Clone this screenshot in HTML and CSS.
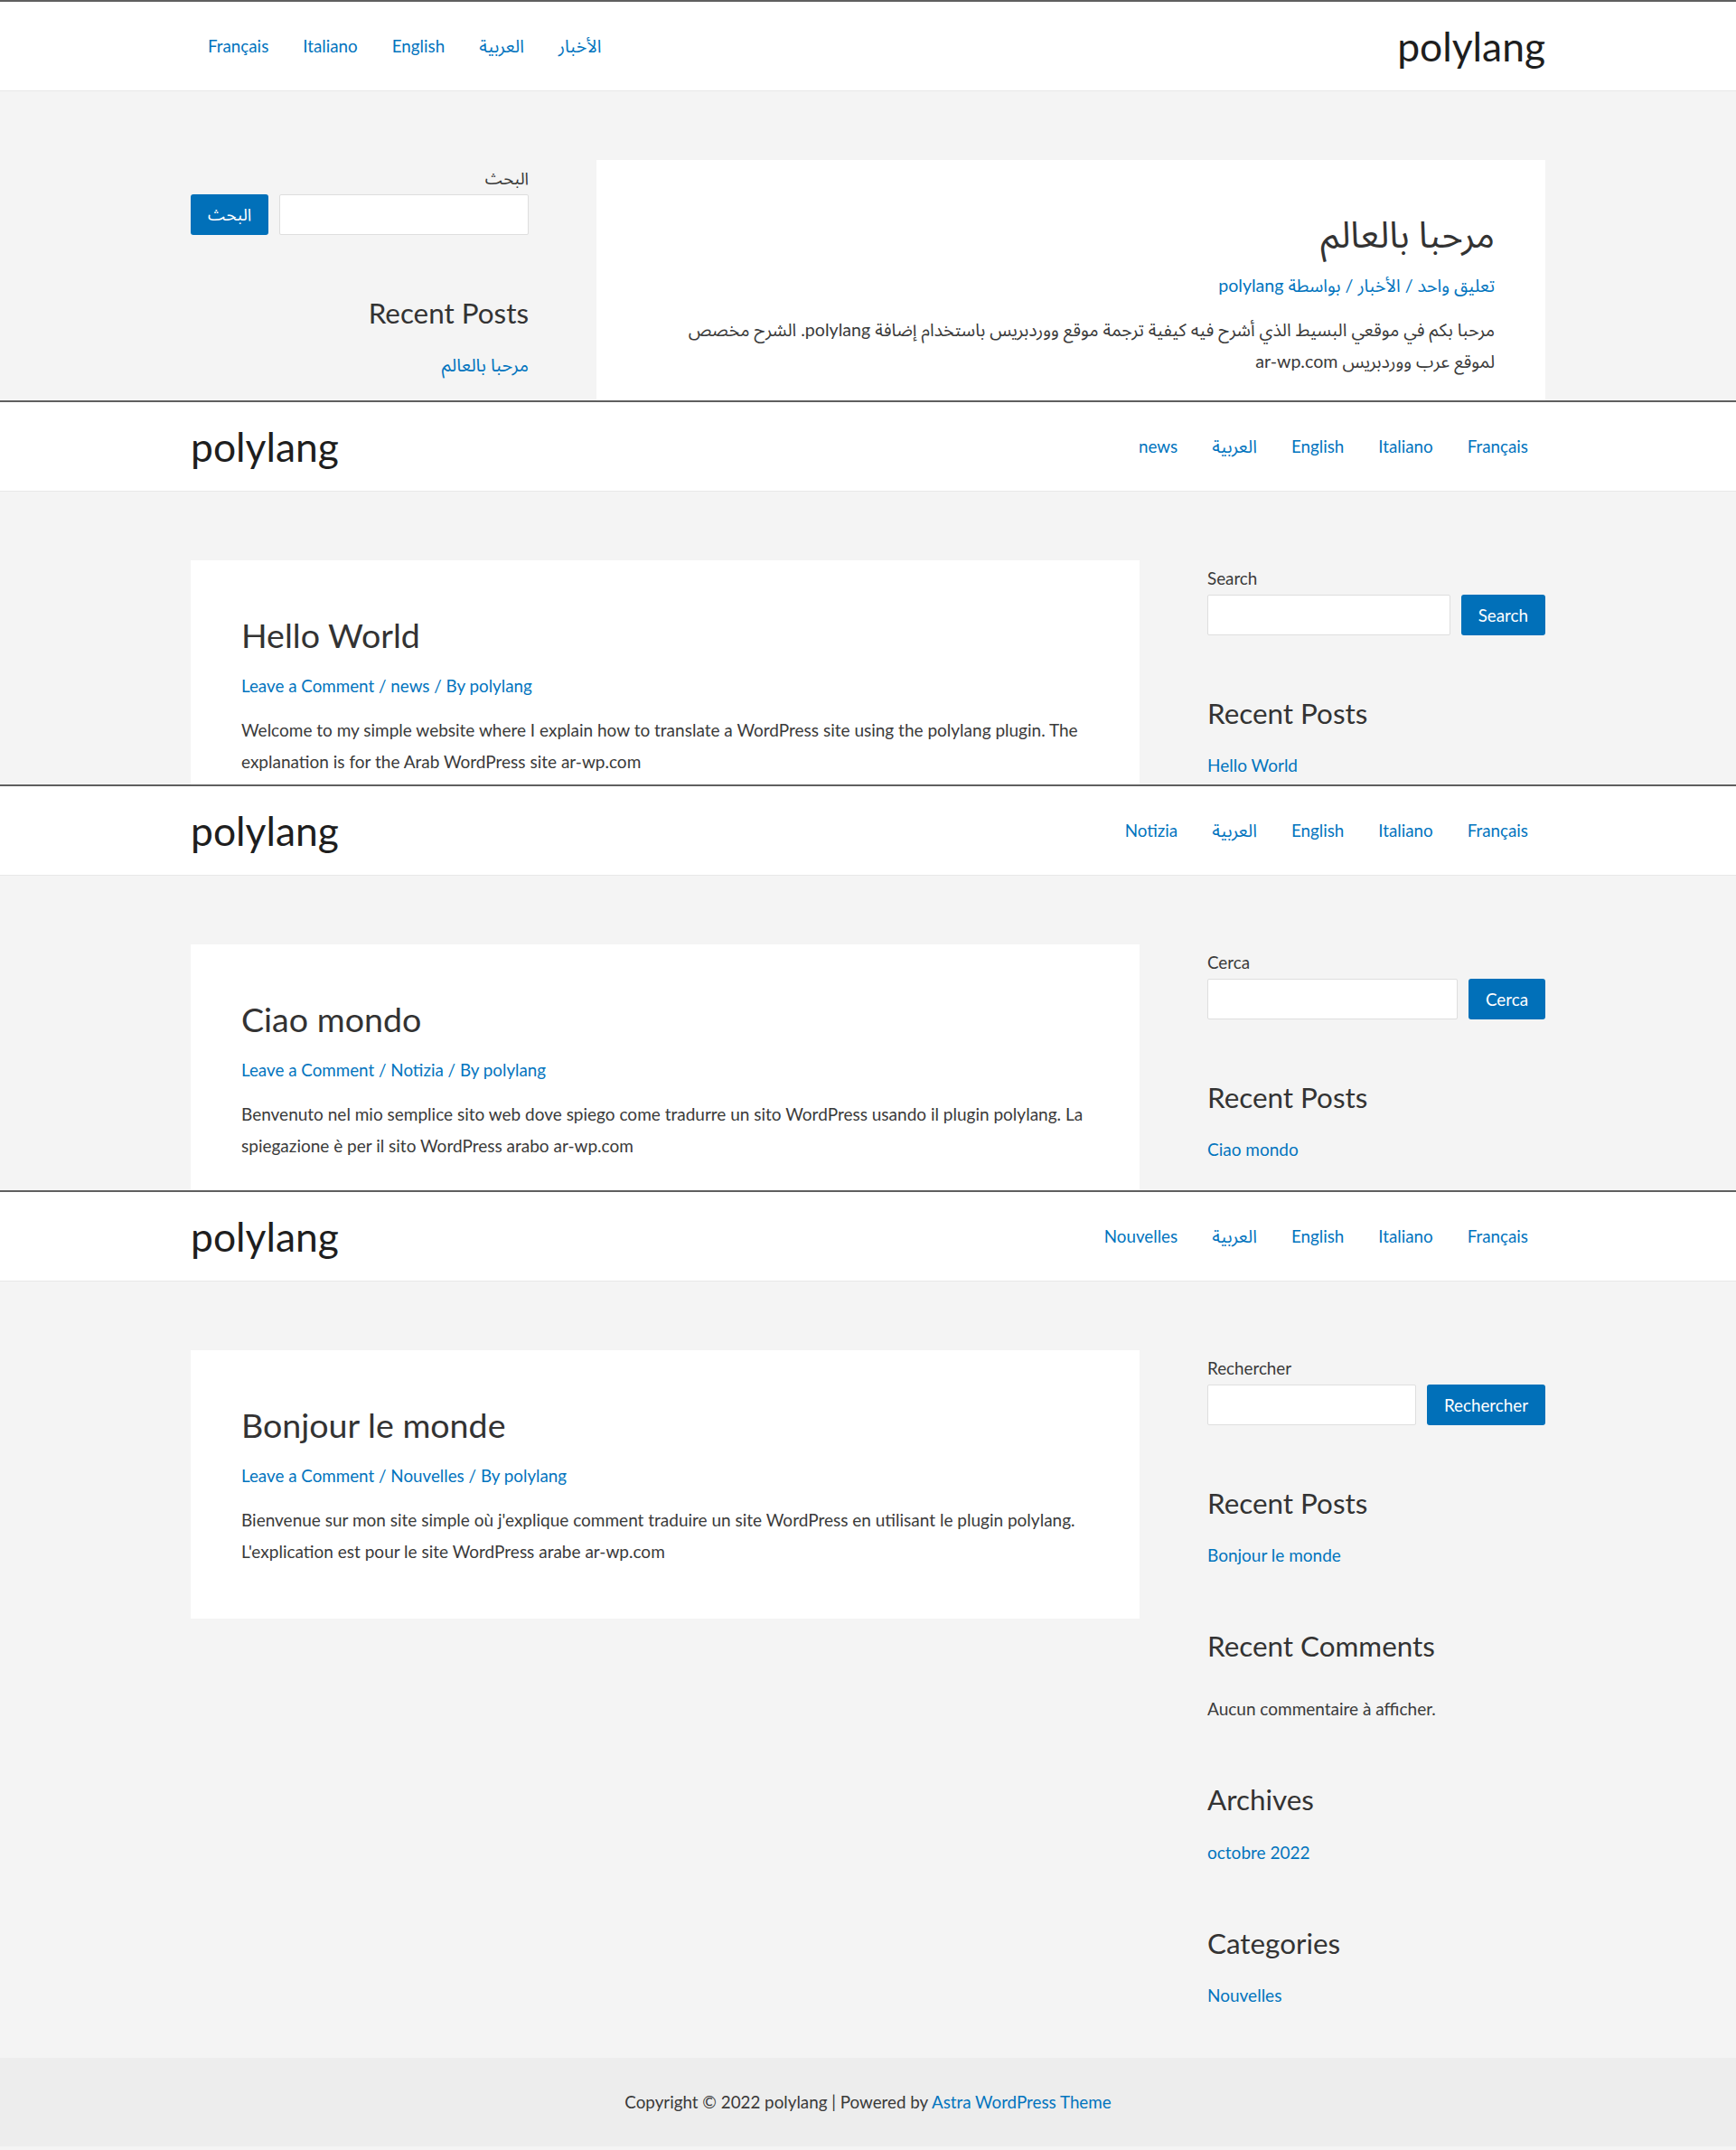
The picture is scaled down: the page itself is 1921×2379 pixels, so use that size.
FILE: index.html
```html
<!DOCTYPE html>
<html lang="en">
<head>
<meta charset="utf-8">
<title>polylang</title>
<link rel="stylesheet" href="styles.css">
</head>
<body>

<div class="shot shot-ar" dir="rtl" lang="ar">
  <header class="site-header">
    <div class="container header-inner">
      <a class="site-title" href="#">polylang</a>
      <nav class="menu"><a class="lang-ar" href="#">الأخبار</a><a class="lang-ar" href="#">العربية</a><a href="#">English</a><a href="#">Italiano</a><a href="#">Français</a></nav>
    </div>
  </header>
  <div class="site-content">
    <div class="container content-grid">
      <article class="card">
        <h2 class="entry-title">مرحبا بالعالم</h2>
        <div class="entry-meta"><a href="#">تعليق واحد</a> / <a href="#">الأخبار</a> / <a href="#">بواسطة polylang</a></div>
        <p class="entry-text">مرحبا بكم في موقعي البسيط الذي أشرح فيه كيفية ترجمة موقع ووردبريس باستخدام إضافة polylang. الشرح مخصص لموقع عرب ووردبريس ar-wp.com</p>
      </article>
      <aside class="sidebar">
        <div class="widget widget-search">
          <label class="search-label">البحث</label>
          <div class="search-row"><input class="search-input" type="text"><button class="search-btn">البحث</button></div>
        </div>
        <div class="widget">
          <h2 class="widget-title">Recent Posts</h2>
          <ul class="widget-list"><li><a href="#">مرحبا بالعالم</a></li></ul>
        </div>
      </aside>
    </div>
  </div>
</div>

<div class="shot shot-en">
  <header class="site-header">
    <div class="container header-inner">
      <a class="site-title" href="#">polylang</a>
      <nav class="menu"><a href="#">news</a><a class="lang-ar" href="#">العربية</a><a href="#">English</a><a href="#">Italiano</a><a href="#">Français</a></nav>
    </div>
  </header>
  <div class="site-content">
    <div class="container content-grid">
      <article class="card">
        <h2 class="entry-title">Hello World</h2>
        <div class="entry-meta"><a href="#">Leave a Comment</a> / <a href="#">news</a> / <a href="#">By polylang</a></div>
        <p class="entry-text">Welcome to my simple website where I explain how to translate a WordPress site using the polylang plugin. The explanation is for the Arab WordPress site ar-wp.com</p>
      </article>
      <aside class="sidebar">
        <div class="widget widget-search">
          <label class="search-label">Search</label>
          <div class="search-row"><input class="search-input" type="text"><button class="search-btn">Search</button></div>
        </div>
        <div class="widget">
          <h2 class="widget-title">Recent Posts</h2>
          <ul class="widget-list"><li><a href="#">Hello World</a></li></ul>
        </div>
      </aside>
    </div>
  </div>
</div>

<div class="shot shot-it">
  <header class="site-header">
    <div class="container header-inner">
      <a class="site-title" href="#">polylang</a>
      <nav class="menu"><a href="#">Notizia</a><a class="lang-ar" href="#">العربية</a><a href="#">English</a><a href="#">Italiano</a><a href="#">Français</a></nav>
    </div>
  </header>
  <div class="site-content">
    <div class="container content-grid">
      <article class="card">
        <h2 class="entry-title">Ciao mondo</h2>
        <div class="entry-meta"><a href="#">Leave a Comment</a> / <a href="#">Notizia</a> / <a href="#">By polylang</a></div>
        <p class="entry-text">Benvenuto nel mio semplice sito web dove spiego come tradurre un sito WordPress usando il plugin polylang. La spiegazione è per il sito WordPress arabo ar-wp.com</p>
      </article>
      <aside class="sidebar">
        <div class="widget widget-search">
          <label class="search-label">Cerca</label>
          <div class="search-row"><input class="search-input" type="text"><button class="search-btn">Cerca</button></div>
        </div>
        <div class="widget">
          <h2 class="widget-title">Recent Posts</h2>
          <ul class="widget-list"><li><a href="#">Ciao mondo</a></li></ul>
        </div>
      </aside>
    </div>
  </div>
</div>

<div class="shot shot-fr">
  <header class="site-header">
    <div class="container header-inner">
      <a class="site-title" href="#">polylang</a>
      <nav class="menu"><a href="#">Nouvelles</a><a class="lang-ar" href="#">العربية</a><a href="#">English</a><a href="#">Italiano</a><a href="#">Français</a></nav>
    </div>
  </header>
  <div class="site-content">
    <div class="container content-grid">
      <article class="card">
        <h2 class="entry-title">Bonjour le monde</h2>
        <div class="entry-meta"><a href="#">Leave a Comment</a> / <a href="#">Nouvelles</a> / <a href="#">By polylang</a></div>
        <p class="entry-text">Bienvenue sur mon site simple où j'explique comment traduire un site WordPress en utilisant le plugin polylang. L'explication est pour le site WordPress arabe ar-wp.com</p>
      </article>
      <aside class="sidebar">
        <div class="widget widget-search">
          <label class="search-label">Rechercher</label>
          <div class="search-row"><input class="search-input" type="text"><button class="search-btn">Rechercher</button></div>
        </div>
        <div class="widget">
          <h2 class="widget-title">Recent Posts</h2>
          <ul class="widget-list"><li><a href="#">Bonjour le monde</a></li></ul>
        </div>
        <div class="widget widget-comments">
          <h2 class="widget-title">Recent Comments</h2>
          <div class="no-comments">Aucun commentaire à afficher.</div>
        </div>
        <div class="widget">
          <h2 class="widget-title">Archives</h2>
          <ul class="widget-list"><li><a href="#">octobre 2022</a></li></ul>
        </div>
        <div class="widget">
          <h2 class="widget-title">Categories</h2>
          <ul class="widget-list"><li><a href="#">Nouvelles</a></li></ul>
        </div>
      </aside>
    </div>
  </div>
  <footer class="site-footer">
    <div class="footer-text">Copyright © 2022 polylang | Powered by <a href="#">Astra WordPress Theme</a></div>
  </footer>
</div>

</body>
</html>
```

FILE: styles.css
```css
* { box-sizing: border-box; margin: 0; padding: 0; }
html, body { background: #f4f4f4; }
body {
  font-family: Lato, "Noto Sans Arabic", "Noto Sans", sans-serif;
  font-size: 19px;
  color: #3a3a3a;
}
a { color: #0274be; text-decoration: none; }

/* each stacked capture of the site */
.shot { border-top: 2px solid #5f5f5f; overflow: hidden; background: #f4f4f4; }
.shot-ar { height: 443px; }
.shot-en { height: 425px; }
.shot-it { height: 449px; }

.container { width: 1499px; margin: 0 auto; }

/* header */
.site-header { background: #fff; border-bottom: 1px solid #e8e8e8; height: 99px; }
.header-inner { height: 100%; display: flex; align-items: center; justify-content: space-between; }
.site-title { font-size: 44.4px; color: #1e1e1e; line-height: 1; }
.menu { display: flex; align-items: center; }
.menu a { padding: 0 19px; font-size: 18.8px; line-height: 1; }
.menu .lang-ar { font-size: 19.8px; }

/* content */
.site-content { padding: 76px 0 52px; }
.content-grid { display: grid; grid-template-columns: 1050px 374px; column-gap: 75px; align-items: start; }

.card { background: #fff; padding: 59.5px 56px 57px; }
.shot-ar .card { padding-top: 58px; }
.entry-title { font-size: 37.6px; font-weight: 400; line-height: 1.2; color: #333; }
.shot-ar .entry-title { font-size: 40px; }
.entry-meta { margin-top: 16.7px; font-size: 18.8px; line-height: 35px; color: #0274be; }
.shot-ar .entry-meta { font-size: 19.6px; margin-top: 15px; }
.entry-text { margin-top: 13.9px; font-size: 19px; line-height: 35px; }
.shot-ar .entry-text { font-size: 19.6px; }

/* sidebar */
.sidebar { padding-top: 2px; }
.widget { margin-bottom: 65px; }
.widget-search { margin-bottom: 67.5px; }
.widget:last-child { margin-bottom: 0; }
.search-label { display: block; font-size: 18.8px; line-height: 35px; }
.search-row { display: flex; gap: 12px; margin-top: 1px; }
.search-input { flex: 1; min-width: 0; height: 45px; border: 1px solid #dedede; border-radius: 2px; background: #fff; }
.search-btn { height: 45px; padding: 0 19px; border: 0; border-radius: 3px; background: #0170b9; color: #fff; font: inherit; font-size: 18.8px; }
.widget-title { font-size: 31.4px; font-weight: 400; line-height: 1.2; color: #333; margin-bottom: 20.5px; }
.widget-list { list-style: none; line-height: 35px; }
.shot-ar .widget-list { font-size: 20px; }
.no-comments { margin-top: 33px; margin-bottom: 5.5px; line-height: 35px; }

/* footer */
.site-footer { background: #ededed; height: 98.4px; display: flex; align-items: center; justify-content: center; }
.footer-text { font-size: 18.8px; color: #3a3a3a; }
```
